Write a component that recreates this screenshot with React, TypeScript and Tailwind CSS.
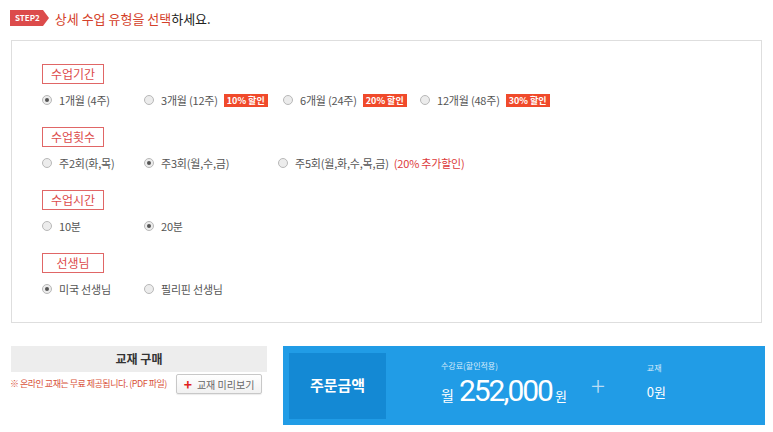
import { useState } from "react";

type Opt = { label: string; badge?: string; note?: string; w: number };

const sections: { title: string; options: Opt[]; checked: number }[] = [
    {
        title: "수업기간",
        checked: 0,
        options: [
            { label: "1개월 (4주)", w: 102 },
            { label: "3개월 (12주)", badge: "10% 할인", w: 139 },
            { label: "6개월 (24주)", badge: "20% 할인", w: 137 },
            { label: "12개월 (48주)", badge: "30% 할인", w: 150 },
        ],
    },
    {
        title: "수업횟수",
        checked: 1,
        options: [
            { label: "주2회(화,목)", w: 102 },
            { label: "주3회(월,수,금)", w: 134 },
            { label: "주5회(월,화,수,목,금)", note: "(20% 추가할인)", w: 220 },
        ],
    },
    {
        title: "수업시간",
        checked: 1,
        options: [
            { label: "10분", w: 102 },
            { label: "20분", w: 100 },
        ],
    },
    {
        title: "선생님",
        checked: 0,
        options: [
            { label: "미국 선생님", w: 102 },
            { label: "필리핀 선생님", w: 120 },
        ],
    },
];

const Radio = ({ on }: { on: boolean }) => (
    <span className="w-[10px] h-[10px] rounded-full border border-[#b8b8b8] bg-[#ececec] flex items-center justify-center shrink-0">
        {on && <span className="w-[4px] h-[4px] rounded-full bg-[#555]" />}
    </span>
);

const App = () => {
    const [picked, setPicked] = useState(sections.map((s) => s.checked));

    return (
        <div className="w-[773px] h-[432px] bg-white text-[#555] font-['Noto_Sans_CJK_KR','Noto_Sans',sans-serif] overflow-hidden">
            {/* step heading */}
            <div className="flex items-center pl-[10px] pt-[10px] h-[26px]">
                <span className="relative flex items-center h-[16px] bg-[#dc4b4b] text-white text-[8px] font-bold pl-[5px] pr-[3px] leading-none">
                    STEP2
                    <span className="absolute right-[-6px] top-0 w-0 h-0 border-y-[8px] border-y-transparent border-l-[6px] border-l-[#dc4b4b]" />
                </span>
                <span className="ml-[12px] text-[13px] text-[#d4412a] leading-none">
                    상세 수업 유형을 선택<span className="text-[#222]">하세요.</span>
                </span>
            </div>

            {/* options panel */}
            <div className="mx-[11px] mt-[14px] h-[283px] border border-[#dedede] pl-[30px] pt-[23px]">
                {sections.map((s, si) => (
                    <div key={s.title} className="h-[63px]">
                        <div className="w-[62px] h-[20px] border border-[#e06666] text-[#dc4b4b] text-[12px] flex items-center justify-center leading-none">
                            {s.title}
                        </div>
                        <div className="flex items-center h-[16px] mt-[8px] text-[11px] text-[#555] tracking-[-0.2px]">
                            {s.options.map((o, oi) => (
                                <div
                                    key={o.label}
                                    onClick={() => setPicked(picked.map((p, i) => (i === si ? oi : p)))}
                                    className="flex items-center shrink-0 cursor-pointer"
                                    style={{ width: o.w }}
                                >
                                    <Radio on={picked[si] === oi} />
                                    <span className="ml-[7px] whitespace-nowrap">{o.label}</span>
                                    {o.badge && (
                                        <span className="ml-[6px] bg-[#f04a2b] text-white text-[9px] font-bold px-[3px] h-[13px] flex items-center leading-none whitespace-nowrap tracking-normal">
                                            {o.badge}
                                        </span>
                                    )}
                                    {o.note && (
                                        <span className="ml-[5px] text-[#dc3a3a] whitespace-nowrap">{o.note}</span>
                                    )}
                                </div>
                            ))}
                        </div>
                    </div>
                ))}
            </div>

            {/* bottom */}
            <div className="flex mt-[23px] pl-[11px]">
                <div className="w-[256px]">
                    <div className="h-[26px] bg-[#ededed] flex items-center justify-center text-[12px] font-bold text-[#333]">
                        교재 구매
                    </div>
                    <div className="flex items-center justify-between mt-[2px] pr-[5px]">
                        <span className="text-[9px] text-[#d9533a] tracking-[-0.5px] whitespace-nowrap -ml-[1px]">
                            ※ 온라인 교재는 무료 제공됩니다. (PDF 파일)
                        </span>
                        <button className="h-[20px] w-[86px] border border-[#c8c8c8] rounded-[2px] bg-gradient-to-b from-white to-[#f1f1f1] flex items-center justify-center text-[10px] text-[#666] shadow-[0_1px_1px_rgba(0,0,0,0.08)]">
                            <span className="text-[#e02020] font-bold text-[14px] leading-none mr-[5px]">+</span>
                            교재 미리보기
                        </button>
                    </div>
                </div>

                <div className="ml-[16px] w-[482px] h-[79px] bg-[#219ce6] flex items-center px-[6px]">
                    <div className="w-[97px] h-[66px] bg-[#1489d4] flex items-center justify-center text-white text-[15px] font-bold">
                        주문금액
                    </div>
                    <div className="ml-[55px] flex flex-col text-white self-start mt-[15px]">
                        <span className="text-[8px] text-[#d8ecfb] leading-[10px]">수강료(할인적용)</span>
                        <div className="flex items-end mt-[6px] h-[28px]">
                            <span className="text-[14px] leading-none mb-[3px]">월</span>
                            <span className="ml-[5px] font-['Roboto',sans-serif] text-[30px] leading-[28px] tracking-[-2px]">252,000</span>
                            <span className="ml-[3px] text-[13px] leading-none mb-[3px]">원</span>
                        </div>
                    </div>
                    <span className="ml-[24px] text-[#b9dcf5] text-[26px] font-light leading-none mb-[2px]">+</span>
                    <div className="ml-[42px] flex flex-col text-white self-start mt-[17px]">
                        <span className="text-[8px] text-[#d8ecfb] leading-[10px]">교재</span>
                        <span className="text-[13px] leading-none mt-[12px]">0원</span>
                    </div>
                </div>
            </div>
        </div>
    );
};

export default App;
